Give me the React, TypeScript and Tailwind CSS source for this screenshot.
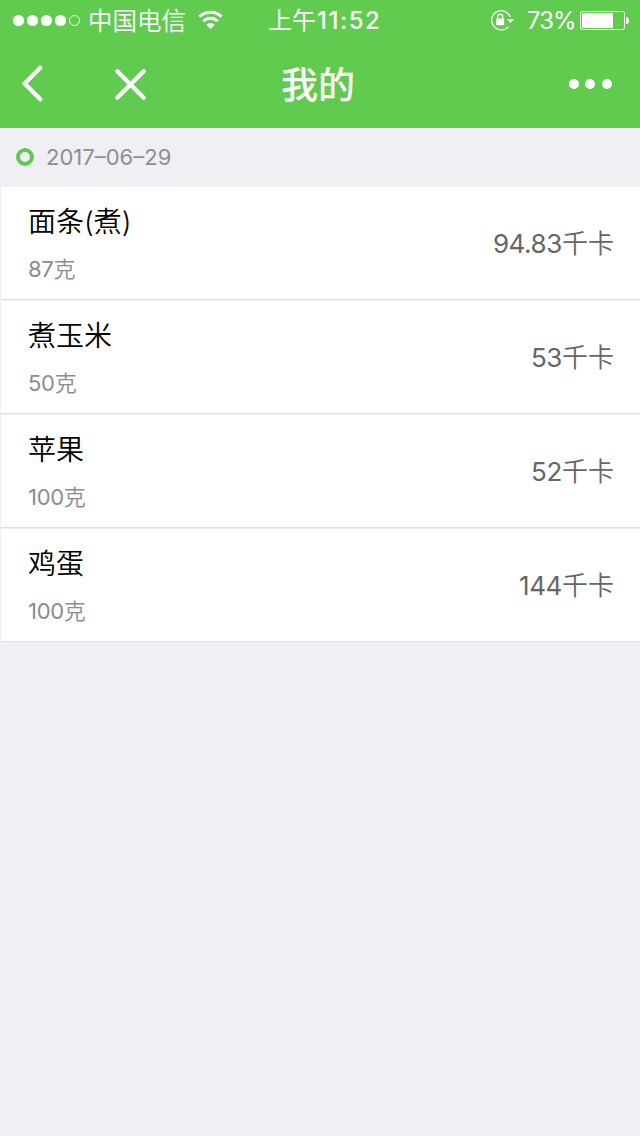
const foods = [
  { name: '面条(煮)', grams: '87', kcal: '94.83' },
  { name: '煮玉米', grams: '50', kcal: '53' },
  { name: '苹果', grams: '100', kcal: '52' },
  { name: '鸡蛋', grams: '100', kcal: '144' },
];

function StatusBar() {
  return (
    <div className="flex h-10 items-center text-white">
      <svg className="ml-3 shrink-0" width="70" height="40" viewBox="0 0 70 40" fill="white">
        <circle cx="6.5" cy="20.5" r="5.6" />
        <circle cx="20.5" cy="20.5" r="5.6" />
        <circle cx="34.5" cy="20.5" r="5.6" />
        <circle cx="48.5" cy="20.5" r="5.6" />
        <circle cx="62.5" cy="20.5" r="5" fill="none" stroke="white" />
      </svg>
      <span className="ml-[6px] w-[98px] shrink-0 pt-[2px] text-[24.5px] leading-10 font-[350] whitespace-nowrap">中国电信</span>
      <svg className="ml-[11px] shrink-0" width="26" height="40" viewBox="197 0 26 40" fill="none" stroke="white" strokeWidth="3">
        <path d="M199.5 16.8a15.5 15.5 0 0 1 22 0" />
        <path d="M203.3 21.2a10.3 10.3 0 0 1 14.4 0" />
        <path d="M206.2 24.8a6.1 6.1 0 0 1 8.6 0L210.5 29z" fill="white" stroke="none" />
      </svg>
      <div className="ml-[45px] flex w-[112px] shrink-0 items-center pt-[2px] whitespace-nowrap">
        <span className="text-[24px] leading-10">上午</span>
        <span className="ml-px text-[24px] leading-10 font-medium tracking-[1.5px]">11:52</span>
      </div>
      <svg className="ml-[110px] shrink-0" width="26" height="40" viewBox="490 0 26 40" fill="none" stroke="white">
        <path d="M510.3 17A9.6 9.6 0 1 0 508.5 26.6" strokeWidth="1.3" />
        <path d="M506.5 19h7.7l-3.8 4z" fill="white" stroke="none" />
        <rect x="496.2" y="18.5" width="8" height="6.7" fill="white" stroke="none" />
        <path d="M497.7 19v-2.2a2.5 2.5 0 0 1 5 0v2.2" strokeWidth="1.4" />
      </svg>
      <span className="ml-[11px] w-[47px] shrink-0 pt-[2px] text-[24px] leading-10 font-normal tracking-[-1px] whitespace-nowrap">73%</span>
      <svg className="ml-[5px] shrink-0" width="51" height="40" viewBox="579 0 51 40" fill="white">
        <rect x="580.5" y="11.5" width="44" height="18" rx="2" fill="none" stroke="white" />
        <rect x="582" y="13" width="31" height="15" rx="1" />
        <path d="M626 17q3 0 3 3.5t-3 3.5z" />
      </svg>
    </div>
  );
}

function NavBar() {
  return (
    <div className="flex h-[88px] items-center text-white">
      <svg className="shrink-0" width="160" height="88" viewBox="0 40 160 88" fill="none" stroke="white" strokeWidth="4.3" strokeLinecap="round">
        <path d="M40.3 67.7 24.6 83.5 40.3 99.3" strokeLinejoin="miter" />
        <path d="M117.3 71.3 143.7 97.7M143.7 71.3 117.3 97.7" />
      </svg>
      <h1 className="ml-[121px] w-[78px] shrink-0 pt-[3px] text-[37px] leading-[88px] font-medium whitespace-nowrap">我的</h1>
      <svg className="ml-[205px] shrink-0" width="60" height="88" viewBox="564 40 60 88" fill="white">
        <circle cx="574" cy="84" r="5" />
        <circle cx="590" cy="84" r="5" />
        <circle cx="607" cy="84" r="5" />
      </svg>
    </div>
  );
}

export default function App() {
  return (
    <div className="min-h-[1136px] w-[640px] bg-[#efeff4] font-['Inter','Noto_Sans_CJK_SC',sans-serif]">
      <header className="h-32 bg-[#61cb4f]">
        <StatusBar />
        <NavBar />
      </header>
      <div className="flex h-[59px] items-center pl-4">
        <span className="mb-px h-[18px] w-[18px] rounded-full border-[4px] border-[#61c953]" />
        <span className="ml-[12px] text-[22px] font-normal text-[#8e8e90]">2017–06–29</span>
      </div>
      <ul className="ml-px">
        {foods.map((food) => (
          <li key={food.name} className="mb-px flex h-[113px] items-center justify-between border-b border-[#dfdfe2] bg-white pr-[26px] pl-[27px]">
            <div className="flex flex-col pt-[6px]">
              <span className="text-[28px] leading-[48px] font-[350] text-black">{food.name}</span>
              <span className="-mt-px mb-px text-[22px] leading-[48px] font-[350] tracking-[-0.3px] text-[#8c8c8c]"><span className="font-normal">{food.grams}</span>克</span>
            </div>
            <span className="text-[26px] font-[350] text-[#666]"><span className="font-normal tracking-[-0.4px]">{food.kcal}</span>千卡</span>
          </li>
        ))}
      </ul>
    </div>
  );
}
